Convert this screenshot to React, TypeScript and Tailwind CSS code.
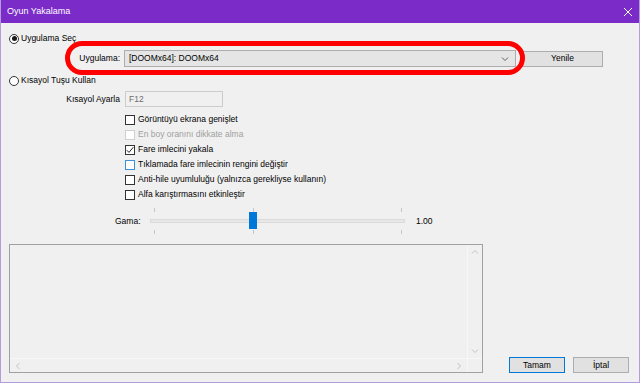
import React from 'react';

type BoxState = 'normal' | 'disabled' | 'checked' | 'hover';

const Radio = ({ checked, label }: { checked?: boolean; label: string }) => (
  <div className="flex items-center h-[13px]">
    <span className="w-[10px] h-[10px] rounded-full border border-[#333] bg-white flex items-center justify-center">
      {checked && <span className="w-[5px] h-[5px] rounded-full bg-[#1a1a1a]" />}
    </span>
    <span className="ml-[2px]">{label}</span>
  </div>
);

const CheckRow = ({ state, label }: { state: BoxState; label: string }) => {
  const box =
    state === 'disabled'
      ? 'border-[#cfcfcf]'
      : state === 'hover'
      ? 'border-[#3c8fd9]'
      : 'border-[#333]';
  return (
    <div className="flex items-center h-[15px] ml-[116px]">
      <span className={`w-[10px] h-[10px] border bg-white flex items-center justify-center ${box}`}>
        {state === 'checked' && (
          <svg width="8" height="8" viewBox="0 0 8 8">
            <path d="M0.8 4.2 L3 6.4 L7.3 1.2" fill="none" stroke="#222" strokeWidth="1" />
          </svg>
        )}
      </span>
      <span className={`ml-[3px] ${state === 'disabled' ? 'text-[#a0a0a0]' : ''}`}>{label}</span>
    </div>
  );
};

const Chevron = ({ dir, color = '#606060' }: { dir: 'up' | 'down' | 'left' | 'right'; color?: string }) => {
  const d = {
    down: 'M1 2.5 L4 5.5 L7 2.5',
    up: 'M1 5.5 L4 2.5 L7 5.5',
    left: 'M5.5 1 L2.5 4 L5.5 7',
    right: 'M2.5 1 L5.5 4 L2.5 7',
  }[dir];
  return (
    <svg width="8" height="8" viewBox="0 0 8 8">
      <path d={d} fill="none" stroke={color} strokeWidth="1" />
    </svg>
  );
};

export default function App() {
  return (
    <div
      className="relative w-[640px] h-[383px] bg-[#f0f0f0] flex flex-col border-l border-r border-b border-[#b49cdb] text-[8.5px] text-black overflow-hidden"
      style={{ fontFamily: '"Liberation Sans", Arial, sans-serif' }}
    >
      {/* title bar */}
      <div className="h-[23px] bg-[#7a2bc8] flex items-center justify-between pl-[6px] pr-[6px] text-white text-[9px] shrink-0">
        <span>Oyun Yakalama</span>
        <svg width="10" height="10" viewBox="0 0 10 10">
          <path d="M1 1 L9 9 M9 1 L1 9" stroke="#fff" strokeWidth="1" />
        </svg>
      </div>

      <div className="flex flex-col pl-[8px]">
        <div className="mt-[9px]">
          <Radio checked label="Uygulama Seç" />
        </div>

        <div className="mt-[5px] flex items-center h-[17px]">
          <span className="w-[111px] text-right">Uygulama:</span>
          <div className="ml-[4px] w-[392px] h-[17px] bg-[#e5e5e5] border border-[#adadad] flex items-center justify-between pl-[4px] pr-[6px]">
            <span>[DOOMx64]: DOOMx64</span>
            <Chevron dir="down" />
          </div>
          <div className="ml-[6px] w-[81px] h-[16px] bg-[#e1e1e1] border border-[#adadad] flex items-center justify-center">
            Yenile
          </div>
        </div>

        <div className="mt-[7px]">
          <Radio label="Kısayol Tuşu Kullan" />
        </div>

        <div className="mt-[4px] flex items-center h-[16px]">
          <span className="w-[111px] text-right">Kısayol Ayarla</span>
          <div className="ml-[5px] w-[98px] h-[16px] bg-[#f0f0f0] border border-[#cccccc] flex items-center pl-[3px] text-[#6d6d6d]">
            F12
          </div>
        </div>

        <div className="mt-[5px] flex flex-col">
          <CheckRow state="normal" label="Görüntüyü ekrana genişlet" />
          <CheckRow state="disabled" label="En boy oranını dikkate alma" />
          <CheckRow state="checked" label="Fare imlecini yakala" />
          <CheckRow state="hover" label="Tıklamada fare imlecinin rengini değiştir" />
          <CheckRow state="normal" label="Anti-hile uyumluluğu (yalnızca gerekliyse kullanın)" />
          <CheckRow state="normal" label="Alfa karıştırmasını etkinleştir" />
        </div>

        <div className="mt-[5px] flex items-center h-[28px]">
          <span className="ml-[106px] w-[35px]">Gama:</span>
          <div className="relative w-[255px] h-[28px] flex items-center">
            <div className="w-full h-[4px] bg-[#e7e7e7] border border-[#dadada]" />
            <span className="absolute left-[4px] top-[1px] w-px h-[4px] bg-[#c6c6c6]" />
            <span className="absolute left-[103px] top-[1px] w-px h-[4px] bg-[#c6c6c6]" />
            <span className="absolute left-[251px] top-[1px] w-px h-[4px] bg-[#c6c6c6]" />
            <span className="absolute left-[4px] bottom-[1px] w-px h-[4px] bg-[#c6c6c6]" />
            <span className="absolute left-[103px] bottom-[1px] w-px h-[4px] bg-[#c6c6c6]" />
            <span className="absolute left-[251px] bottom-[1px] w-px h-[4px] bg-[#c6c6c6]" />
            <span className="absolute left-[99px] top-[5px] w-[8px] h-[17px] bg-[#0078d7]" />
          </div>
          <span className="ml-[11px]">1.00</span>
        </div>

        <div className="mt-[9px] flex items-end">
          <div className="w-[474px] h-[129px] border border-[#a0a0a0] grid grid-cols-[1fr_15px] grid-rows-[1fr_14px]">
            <div className="bg-[#f0f0f0]" />
            <div className="border-l border-[#f7f7f7] flex flex-col items-center justify-between py-[3px]">
              <Chevron dir="up" color="#c2c2c2" />
              <Chevron dir="down" color="#c2c2c2" />
            </div>
            <div className="border-t border-[#f7f7f7] flex items-center justify-between px-[4px]">
              <Chevron dir="left" color="#c2c2c2" />
              <Chevron dir="right" color="#c2c2c2" />
            </div>
            <div className="border-t border-l border-[#f7f7f7]" />
          </div>
          <div className="ml-[26px] w-[56px] h-[16px] bg-[#e1e1e1] border border-[#0078d7] flex items-center justify-center">
            Tamam
          </div>
          <div className="ml-[8px] w-[56px] h-[16px] bg-[#e1e1e1] border border-[#adadad] flex items-center justify-center">
            İptal
          </div>
        </div>
      </div>

      {/* red annotation around the app selector */}
      <div className="absolute left-[64px] top-[41px] w-[460px] h-[34px] rounded-full border-[5px] border-[#ff0000] pointer-events-none" />
    </div>
  );
}
